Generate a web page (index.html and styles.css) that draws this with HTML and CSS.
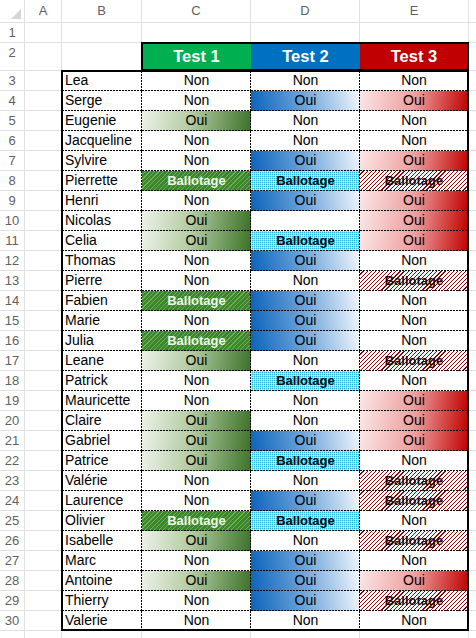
FILE: index.html
```html
<!DOCTYPE html>
<html lang="fr">
<head>
<meta charset="utf-8">
<title>Tests</title>
<link rel="stylesheet" href="styles.css">
</head>
<body>
<div class="sheet">
  <div class="corner"><svg width="24" height="22" viewBox="0 0 24 22"><polygon points="21,9 21,19 11,19" fill="#d6d6d6"/></svg></div>
  <div class="ch">A</div><div class="ch">B</div><div class="ch">C</div><div class="ch">D</div><div class="ch">E</div><div class="ch"></div>

  <div class="rh">1</div><div></div><div></div><div></div><div></div><div></div><div></div>

  <div class="hdr">
    <div class="t t1">Test 1</div>
    <div class="t t2">Test 2</div>
    <div class="t t3">Test 3</div>
  </div>
  <div class="rh">2</div><div></div><div></div><div></div>

  <div class="tbl">
    <div class="c n">Lea</div><div class="c">Non</div><div class="c">Non</div><div class="c e">Non</div>
    <div class="c n">Serge</div><div class="c">Non</div><div class="c oui2">Oui</div><div class="c e oui3">Oui</div>
    <div class="c n">Eugenie</div><div class="c oui1">Oui</div><div class="c">Non</div><div class="c e">Non</div>
    <div class="c n">Jacqueline</div><div class="c">Non</div><div class="c">Non</div><div class="c e">Non</div>
    <div class="c n">Sylvire</div><div class="c">Non</div><div class="c oui2">Oui</div><div class="c e oui3">Oui</div>
    <div class="c n">Pierrette</div><div class="c bal1">Ballotage</div><div class="c bal2">Ballotage</div><div class="c e bal3">Ballotage</div>
    <div class="c n">Henri</div><div class="c">Non</div><div class="c oui2">Oui</div><div class="c e oui3">Oui</div>
    <div class="c n">Nicolas</div><div class="c oui1">Oui</div><div class="c"></div><div class="c e oui3">Oui</div>
    <div class="c n">Celia</div><div class="c oui1">Oui</div><div class="c bal2">Ballotage</div><div class="c e oui3">Oui</div>
    <div class="c n">Thomas</div><div class="c">Non</div><div class="c oui2">Oui</div><div class="c e">Non</div>
    <div class="c n">Pierre</div><div class="c">Non</div><div class="c">Non</div><div class="c e bal3">Ballotage</div>
    <div class="c n">Fabien</div><div class="c bal1">Ballotage</div><div class="c oui2">Oui</div><div class="c e">Non</div>
    <div class="c n">Marie</div><div class="c">Non</div><div class="c oui2">Oui</div><div class="c e">Non</div>
    <div class="c n">Julia</div><div class="c bal1">Ballotage</div><div class="c oui2">Oui</div><div class="c e">Non</div>
    <div class="c n">Leane</div><div class="c oui1">Oui</div><div class="c">Non</div><div class="c e bal3">Ballotage</div>
    <div class="c n">Patrick</div><div class="c">Non</div><div class="c bal2">Ballotage</div><div class="c e">Non</div>
    <div class="c n">Mauricette</div><div class="c">Non</div><div class="c">Non</div><div class="c e oui3">Oui</div>
    <div class="c n">Claire</div><div class="c oui1">Oui</div><div class="c">Non</div><div class="c e oui3">Oui</div>
    <div class="c n">Gabriel</div><div class="c oui1">Oui</div><div class="c oui2">Oui</div><div class="c e oui3">Oui</div>
    <div class="c n">Patrice</div><div class="c oui1">Oui</div><div class="c bal2">Ballotage</div><div class="c e">Non</div>
    <div class="c n">Valérie</div><div class="c">Non</div><div class="c">Non</div><div class="c e bal3">Ballotage</div>
    <div class="c n">Laurence</div><div class="c">Non</div><div class="c oui2">Oui</div><div class="c e bal3">Ballotage</div>
    <div class="c n">Olivier</div><div class="c bal1">Ballotage</div><div class="c bal2">Ballotage</div><div class="c e">Non</div>
    <div class="c n">Isabelle</div><div class="c oui1">Oui</div><div class="c">Non</div><div class="c e bal3">Ballotage</div>
    <div class="c n">Marc</div><div class="c">Non</div><div class="c oui2">Oui</div><div class="c e">Non</div>
    <div class="c n">Antoine</div><div class="c oui1">Oui</div><div class="c oui2">Oui</div><div class="c e oui3">Oui</div>
    <div class="c n">Thierry</div><div class="c">Non</div><div class="c oui2">Oui</div><div class="c e bal3">Ballotage</div>
    <div class="c n last">Valerie</div><div class="c last">Non</div><div class="c last">Non</div><div class="c e last">Non</div>
  </div>

  <div class="rh">3</div><div></div><div></div>
  <div class="rh">4</div><div></div><div></div>
  <div class="rh">5</div><div></div><div></div>
  <div class="rh">6</div><div></div><div></div>
  <div class="rh">7</div><div></div><div></div>
  <div class="rh">8</div><div></div><div></div>
  <div class="rh">9</div><div></div><div></div>
  <div class="rh">10</div><div></div><div></div>
  <div class="rh">11</div><div></div><div></div>
  <div class="rh">12</div><div></div><div></div>
  <div class="rh">13</div><div></div><div></div>
  <div class="rh">14</div><div></div><div></div>
  <div class="rh">15</div><div></div><div></div>
  <div class="rh">16</div><div></div><div></div>
  <div class="rh">17</div><div></div><div></div>
  <div class="rh">18</div><div></div><div></div>
  <div class="rh">19</div><div></div><div></div>
  <div class="rh">20</div><div></div><div></div>
  <div class="rh">21</div><div></div><div></div>
  <div class="rh">22</div><div></div><div></div>
  <div class="rh">23</div><div></div><div></div>
  <div class="rh">24</div><div></div><div></div>
  <div class="rh">25</div><div></div><div></div>
  <div class="rh">26</div><div></div><div></div>
  <div class="rh">27</div><div></div><div></div>
  <div class="rh">28</div><div></div><div></div>
  <div class="rh">29</div><div></div><div></div>
  <div class="rh">30</div><div></div><div></div>

  <div class="rh"></div><div></div><div></div><div></div><div></div><div></div><div></div>
</div>
</body>
</html>
```
FILE: styles.css
```css
html, body {
  margin: 0;
  padding: 0;
  background: #fff;
}
body {
  font-family: "Liberation Sans", Arial, sans-serif;
  color: #000;
}
.sheet {
  display: grid;
  grid-template-columns: 24px 36px 79px 108px 108px 108px 1fr;
  grid-template-rows: 22px 19px 27px repeat(28, 19px) 1fr;
  gap: 1px;
  background: #e0e0e0;
  width: 476px;
  height: 638px;
  overflow: hidden;
}
.sheet > div {
  background: #fff;
  overflow: hidden;
}
.corner svg {
  display: block;
}
.ch {
  font-size: 13px;
  line-height: 22px;
  text-align: center;
  color: #5f5f5f;
}
.rh {
  font-size: 13px;
  line-height: 19px;
  text-align: center;
  color: #5f5f5f;
}
.hdr {
  grid-column: 4 / 7;
  grid-row: 3;
  display: grid;
  grid-template-columns: 109px 109px 108px;
  outline: 2px solid #000;
  outline-offset: -1px;
  position: relative;
  z-index: 1;
}
.sheet > .hdr { overflow: visible; }
.t {
  color: #fff;
  font-weight: bold;
  font-size: 16.5px;
  line-height: 27px;
  text-align: center;
}
.t1 { background: #00b050; }
.t2 { background: #0070c0; }
.t3 { background: #c00000; }

.tbl {
  grid-column: 3 / 7;
  grid-row: 4 / 32;
  display: grid;
  grid-template-columns: 80px 109px 109px 108px;
  grid-template-rows: repeat(27, 20px) 19px;
  outline: 2px solid #000;
  outline-offset: -1px;
  position: relative;
  z-index: 1;
}
.sheet > .tbl { overflow: visible; }
.c {
  --fill: #fff;
  font-size: 14px;
  line-height: 19px;
  text-align: center;
  white-space: nowrap;
  overflow: hidden;
  background:
    repeating-linear-gradient(90deg, #000 0 2px, transparent 2px 3px) left bottom / 100% 1px no-repeat,
    repeating-linear-gradient(180deg, #000 0 2px, transparent 2px 3px) right top / 1px 100% no-repeat,
    var(--fill);
}
.c.e {
  background:
    repeating-linear-gradient(90deg, #000 0 2px, transparent 2px 3px) left bottom / 100% 1px no-repeat,
    var(--fill);
}
.c.last {
  background:
    repeating-linear-gradient(180deg, #000 0 2px, transparent 2px 3px) right top / 1px 100% no-repeat,
    var(--fill);
}
.c.e.last {
  background: var(--fill);
}
.n {
  text-align: left;
  padding-left: 3px;
}
.oui1 { --fill: linear-gradient(100deg, #edf2e9 0%, #b3cba1 45%, #3b7228 100%); }
.oui2 { --fill: linear-gradient(78deg, #0b63bc 0%, #6fa6db 50%, #f3f8fd 100%); }
.oui3 { --fill: linear-gradient(100deg, #fbe6e6 0%, #ee9f9f 50%, #c00000 100%); }
.bal1 {
  --fill: repeating-linear-gradient(135deg, #3a872c 0 2.4px, #72ad58 2.4px 3.2px);
  color: #eef7e8;
  font-weight: bold;
  font-size: 13px;
}
.bal2 {
  --fill: linear-gradient(90deg, rgba(255, 255, 255, 0.5) 1px, transparent 1px) 0 0 / 2px 2px, linear-gradient(180deg, rgba(255, 255, 255, 0.5) 1px, transparent 1px) 1px 0 / 2px 2px, #30b6da;
  color: #0b0b0b;
  font-weight: bold;
  font-size: 13px;
}
.bal3 {
  --fill: repeating-linear-gradient(135deg, #ffffff 0 2.1px, #8a0a0a 2.1px 2.9px);
  color: #2a0505;
  font-weight: bold;
  font-size: 13px;
}
```
